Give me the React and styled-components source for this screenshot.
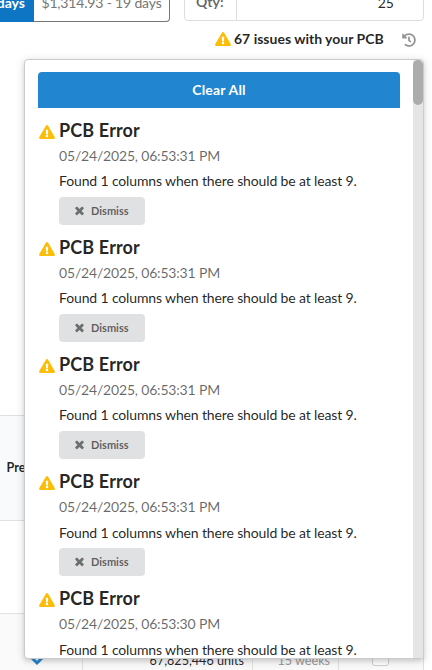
import React from "react";
import styled, { createGlobalStyle } from "styled-components";
import { FaExclamationTriangle, FaHistory } from "react-icons/fa";

const Global = createGlobalStyle`
  *, *::before, *::after { box-sizing: border-box; }
  html, body { margin: 0; height: 670px; overflow: hidden; background: #fff; }
  body {
    font: 14px/20px Lato, "Liberation Sans", sans-serif;
    color: rgba(0, 0, 0, 0.87);
  }
`;

const Page = styled.main`
  position: relative;
  width: 432px;
  height: 670px;
  overflow: hidden;
  display: flex;
  flex-direction: column;
`;

const TopBar = styled.div`
  display: flex;
  align-items: flex-end;
  height: 22px;
  flex: none;
`;

const PriceChoice = styled.div`
  width: ${(p) => p.$width};
  height: 38px;
  padding-top: 8px;
  white-space: nowrap;
  display: flex;
  border: 1px solid ${(p) => (p.$active ? "#0e74c4" : "#767676")};
  border-width: ${(p) => (p.$active ? "1px 0" : "1px 1px 1px 0")};
  border-radius: ${(p) => (p.$active ? "0" : "0 4px 4px 0")};
  color: ${(p) => (p.$active ? "#fff" : "#767676")};
  background: ${(p) => (p.$active ? "#0e74c4" : "#fff")};
  font-weight: ${(p) => (p.$active ? 700 : 400)};
  letter-spacing: ${(p) => (p.$active ? "0" : "-0.17px")};
  justify-content: ${(p) => (p.$active ? "flex-end" : "center")};
  padding-right: ${(p) => (p.$active ? "9px" : "0")};
`;

const Quantity = styled.div`
  display: flex;
  width: 240px;
  height: 38px;
  margin: 0 0 1px 14px;
  border: 1px solid #dcdddd;
  border-radius: 4px;
`;

const QuantityLabel = styled.div`
  width: 52px;
  padding: 8px 0 0 11px;
  font-weight: 700;
  color: rgba(0, 0, 0, 0.6);
  border-right: 1px solid #dcdddd;
`;

const QuantityValue = styled.div`
  flex: 1;
  padding: 9px 29px 0 0;
  text-align: right;
`;

const IssueBar = styled.div`
  display: flex;
  align-items: center;
  height: 34px;
  padding-left: 215px;
  flex: none;
  font-weight: 700;
  white-space: nowrap;
`;

const IssueText = styled.span`
  margin-left: 3px;
  width: 168px;
`;

const WarningIcon = styled(FaExclamationTriangle)`
  width: 16px;
  height: 14px;
  flex: none;
  color: #fbbd08;
`;

const HistoryIcon = styled(FaHistory)`
  width: 14px;
  height: 14px;
  color: #949494;
  margin-top: 1px;
`;

const Parts = styled.div`
  width: 424px;
  margin-top: 359px;
  border-top: 1px solid #dedfdf;
  border-right: 1px solid #dedfdf;
`;

const PartsHead = styled.div`
  height: 105px;
  padding: 42px 0 0 6.5px;
  background: #f9fafb;
  border-bottom: 1px solid #e1e2e3;
  font-size: 12.6px;
  font-weight: 700;
`;

const PartsGap = styled.div`
  height: 93px;
  border-bottom: 1px solid #e1e2e2;
`;

const PartsRow = styled.div`
  display: grid;
  grid-template-columns: 83px 170px 86px 1fr;
  height: 58px;
  background: #fafafa;
  font-size: 12.6px;
`;

const Cell = styled.div`
  display: flex;
  padding: ${(p) => p.$pad || "37px 8px 0 0"};
  justify-content: flex-end;
  border-right: ${(p) => (p.$last ? "0" : "1px solid #e2e2e2")};
  color: ${(p) => (p.$muted ? "#999" : "inherit")};
`;

const Chevron = styled.svg`
  width: 14px;
  height: 14px;
`;

const CheckBox = styled.span`
  width: 17px;
  height: 17px;
  border: 1px solid #d0d0d1;
  border-radius: 3px;
  background: #fff;
`;

const Popup = styled.section`
  position: absolute;
  left: 24px;
  top: 59px;
  width: 400px;
  height: 600px;
  display: flex;
  overflow: hidden;
  background: #fff;
  border: 1px solid #cbcbcc;
  border-radius: 4px;
  box-shadow: 0 2px 4px rgba(34, 36, 38, 0.12), 0 2px 10px rgba(34, 36, 38, 0.15);
`;

const PopupBody = styled.div`
  flex: 1;
  height: 598px;
  overflow: hidden;
  padding: 12px 13px 0;
`;

const ScrollTrack = styled.div`
  width: 10px;
  background: #e5e5e5;
`;

const ScrollThumb = styled.div`
  height: 45px;
  border-radius: 5px;
  background: #acacac;
`;

const ClearButton = styled.button`
  display: block;
  width: 100%;
  height: 36px;
  padding: 0;
  border: 0;
  border-radius: 4px 4px 0 0;
  background: #2185d0;
  color: #fff;
  font: 700 14px/14px Lato, "Liberation Sans", sans-serif;
  letter-spacing: 0.18px;
`;

const IssueList = styled.div`
  padding-top: 9.8px;
`;

const Issue = styled.article`
  display: flex;
  height: 117.15px;
  padding-left: 1px;
`;

const IssueIcon = styled.div`
  width: 20px;
  padding-top: 7px;
  line-height: 0;
`;

const IssueContent = styled.div`
  white-space: nowrap;
`;

const Title = styled.h3`
  margin: 0;
  font-size: 18px;
  line-height: 24px;
  font-weight: 700;
  letter-spacing: 0.14px;
`;

const Time = styled.div`
  margin-top: 4.1px;
  color: rgba(0, 0, 0, 0.6);
  letter-spacing: -0.18px;
`;

const Message = styled.div`
  margin-top: 5.2px;
  letter-spacing: -0.138px;
`;

const Dismiss = styled.button`
  display: flex;
  align-items: center;
  width: 86px;
  height: 28px;
  margin-top: 5.8px;
  padding: 0 0 1px 14px;
  gap: 5px;
  border: 0;
  border-radius: 4px;
  background: #e0e1e2;
  color: rgba(0, 0, 0, 0.6);
  font: 700 11px/11px Lato, "Liberation Sans", sans-serif;
`;

const Cross = styled.svg`
  width: 13px;
  height: 13px;
  fill: #6d6e6e;
`;

const times = ["06:53:31", "06:53:31", "06:53:31", "06:53:31", "06:53:30"];

export default function App() {
  return (
    <>
      <Global />
      <Page>
        <TopBar>
          <PriceChoice $active $width="34px">days</PriceChoice>
          <PriceChoice $width="136px">$1,314.93 - 19 days</PriceChoice>
          <Quantity>
            <QuantityLabel>Qty:</QuantityLabel>
            <QuantityValue>25</QuantityValue>
          </Quantity>
        </TopBar>
        <IssueBar>
          <WarningIcon />
          <IssueText>67 issues with your PCB</IssueText>
          <HistoryIcon />
        </IssueBar>
        <Parts>
          <PartsHead>Pre</PartsHead>
          <PartsGap />
          <PartsRow>
            <Cell $pad="39px 38px 0 0">
              <Chevron viewBox="0 0 14 14">
                <path d="M2 5 7 10l5-5" fill="none" stroke="#2185d0" strokeWidth="3" />
              </Chevron>
            </Cell>
            <Cell>67,825,446 units</Cell>
            <Cell $muted>15 weeks</Cell>
            <Cell $last $pad="35px 34px 0 0"><CheckBox /></Cell>
          </PartsRow>
        </Parts>
        <Popup>
          <PopupBody>
            <ClearButton>Clear All</ClearButton>
            <IssueList>
              {times.map((time, i) => (
                <Issue key={i}>
                  <IssueIcon><WarningIcon /></IssueIcon>
                  <IssueContent>
                    <Title>PCB Error</Title>
                    <Time>05/24/2025, {time} PM</Time>
                    <Message>Found 1 columns when there should be at least 9.</Message>
                    <Dismiss>
                      <Cross viewBox="0 0 1792 1792">
                        <path d="M1490 1322q0 40-28 68l-136 136q-28 28-68 28t-68-28l-294-294-294 294q-28 28-68 28t-68-28l-136-136q-28-28-28-68t28-68l294-294-294-294q-28-28-28-68t28-68l136-136q28-28 68-28t68 28l294 294 294-294q28-28 68-28t68 28l136 136q28 28 28 68t-28 68l-294 294 294 294q28 28 28 68z" />
                      </Cross>
                      Dismiss
                    </Dismiss>
                  </IssueContent>
                </Issue>
              ))}
            </IssueList>
          </PopupBody>
          <ScrollTrack><ScrollThumb /></ScrollTrack>
        </Popup>
      </Page>
    </>
  );
}
